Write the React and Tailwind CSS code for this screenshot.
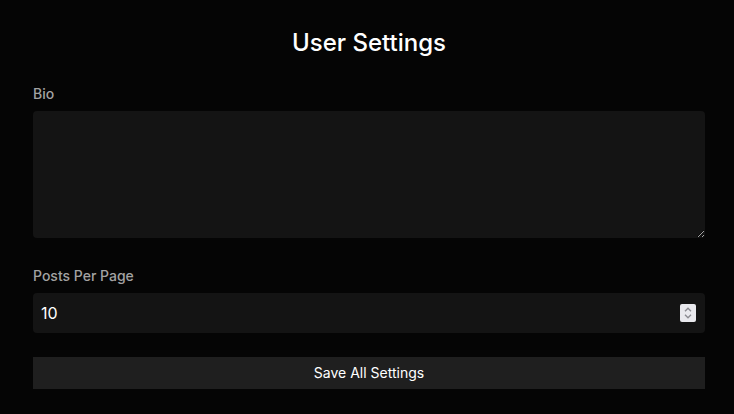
export default function App() {
  return (
    <div className="min-h-screen bg-[#050505] pl-[33px] pr-[29px] pt-[27px] font-['Inter',sans-serif]">
      <h1 className="text-center text-[24px] leading-8 font-medium text-white mb-[25px]">
        User Settings
      </h1>

      <div className="mb-[28px]">
        <label className="block text-sm leading-5 font-medium text-[#a3a3a3] mb-[7px]">
          Bio
        </label>
        <textarea className="block w-full h-[127px] rounded bg-[#141414] text-white p-2 outline-none" />
      </div>

      <div className="mb-[24px]">
        <label className="block text-sm leading-5 font-medium text-[#a3a3a3] mb-[7px]">
          Posts Per Page
        </label>
        <div className="relative">
          <input
            type="number"
            defaultValue={10}
            className="block w-full h-[40px] rounded bg-[#141414] text-white text-base px-2 outline-none [appearance:textfield] [&::-webkit-inner-spin-button]:appearance-none"
          />
          {/* always-visible spinner like the native light one */}
          <div className="absolute right-[9px] top-[11px] w-[16px] h-[18px] rounded-[2px] bg-[#e9e9ed] flex flex-col items-center justify-center gap-[2px] pointer-events-none">
            <svg width="8" height="5" viewBox="0 0 8 5" fill="none" stroke="#8a8a90" strokeWidth="1.3">
              <path d="M1 4.2L4 1.2L7 4.2" />
            </svg>
            <svg width="8" height="5" viewBox="0 0 8 5" fill="none" stroke="#8a8a90" strokeWidth="1.3">
              <path d="M1 0.8L4 3.8L7 0.8" />
            </svg>
          </div>
        </div>
      </div>

      <button className="w-full h-[32px] bg-[#1f1f1f] text-white text-sm">
        Save All Settings
      </button>
    </div>
  );
}
